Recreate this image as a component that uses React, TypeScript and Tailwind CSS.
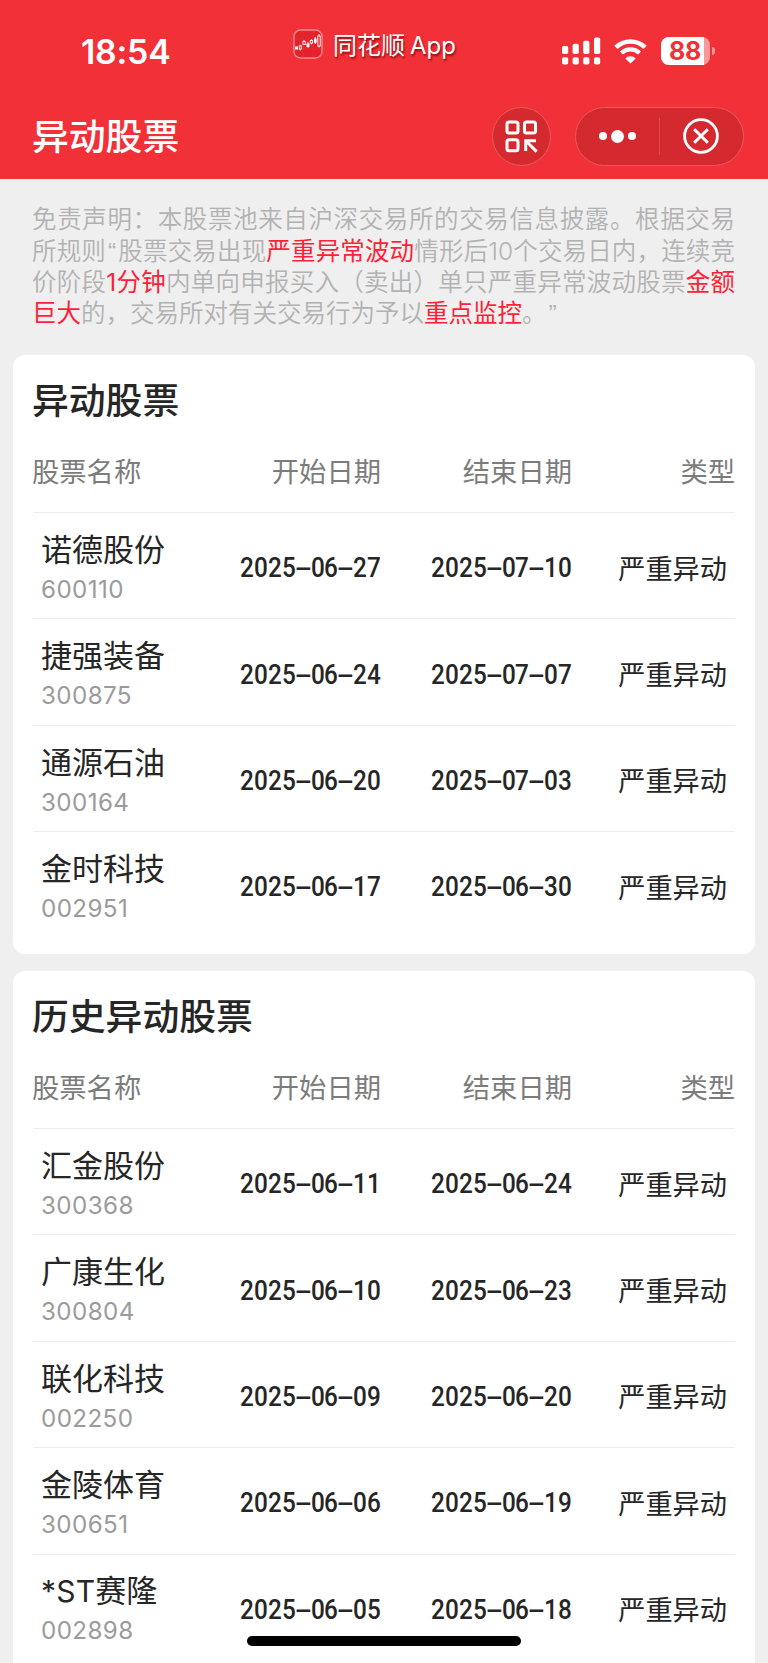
import React from "react";

type Stock = { name: string; code: string; start: string; end: string };

const current: Stock[] = [
  { name: "诺德股份", code: "600110", start: "2025-06-27", end: "2025-07-10" },
  { name: "捷强装备", code: "300875", start: "2025-06-24", end: "2025-07-07" },
  { name: "通源石油", code: "300164", start: "2025-06-20", end: "2025-07-03" },
  { name: "金时科技", code: "002951", start: "2025-06-17", end: "2025-06-30" },
];

const history: Stock[] = [
  { name: "汇金股份", code: "300368", start: "2025-06-11", end: "2025-06-24" },
  { name: "广康生化", code: "300804", start: "2025-06-10", end: "2025-06-23" },
  { name: "联化科技", code: "002250", start: "2025-06-09", end: "2025-06-20" },
  { name: "金陵体育", code: "300651", start: "2025-06-06", end: "2025-06-19" },
  { name: "*ST赛隆", code: "002898", start: "2025-06-05", end: "2025-06-18" },
];

function DateText({ value }: { value: string }) {
  return (
    <span className="flex justify-end pt-[5px] font-['Roboto'] text-[27px] leading-[32px] font-medium">
      {value.split("").map((ch, i) => (
        <span
          key={i}
          className={
            ch === "-"
              ? "flex w-[14.9px] origin-center scale-x-[1.95] justify-center"
              : "flex w-[13.9px] origin-center scale-x-[0.9] justify-center"
          }
        >
          {ch}
        </span>
      ))}
    </span>
  );
}

function StockName({ name }: { name: string }) {
  const latin = name.match(/^[*A-Z]+/)?.[0] ?? "";
  return (
    <div className="text-[31px] leading-[40px] whitespace-nowrap">
      {latin && <span className="font-['Inter'] text-[30px] leading-none tracking-[0.2px]">{latin}</span>}
      {name.slice(latin.length)}
    </div>
  );
}

function Card({ title, rows }: { title: string; rows: Stock[] }) {
  const cols = "grid grid-cols-[157px_191px_191px_163px] items-center";
  return (
    <section className="rounded-xl bg-white px-5 pb-4">
      <h2 className="-ml-px flex h-[88px] items-center pb-px text-[36.8px] font-medium text-[#262626]">{title}</h2>
      <div className={`${cols} h-[69.4px] pb-[13px] text-[27.3px] text-[#7c7c7c]`}>
        <span className="-ml-px">股票名称</span>
        <span className="text-right">开始日期</span>
        <span className="text-right">结束日期</span>
        <span className="text-right">类型</span>
      </div>
      {rows.map((r) => (
        <div key={r.code} className={`${cols} h-[106.4px] border-t border-[#ededed] text-[#262626]`}>
          <div className="pt-[7px] pl-2">
            <StockName name={r.name} />
            <div className="font-['Inter'] text-[24.2px] leading-[43px] tracking-[0.4px] text-[#9b9b9b]">
              {r.code}
            </div>
          </div>
          <DateText value={r.start} />
          <DateText value={r.end} />
          <span className="pt-[2.6px] pr-2 text-right text-[27.2px]">严重异动</span>
        </div>
      ))}
    </section>
  );
}

function Red({ children }: { children: React.ReactNode }) {
  return <span className="font-normal text-[#ff1f38]">{children}</span>;
}

function Quote({ children }: { children: React.ReactNode }) {
  return <span className="ml-[2px] font-['Liberation_Sans'] leading-none tracking-[2px]">{children}</span>;
}

function AppLogo() {
  return (
    <svg className="h-[30px] w-[30px]" viewBox="0 0 30 30" fill="none">
      <rect x="1" y="1" width="28" height="28" rx="6.5" fill="#e3222b" stroke="#fa8a8f" strokeWidth="1.4" />
      <path d="M2 10h26M2 20h26M10 2v26M20 2v26" stroke="#ee343c" strokeWidth=".5" />
      <g fill="#fff">
        <rect x="2" y="17.5" width="3" height="3" />
        <rect x="13.5" y="14.5" width="3" height="3.5" />
        <rect x="21" y="9.5" width="2.6" height="4.2" />
      </g>
      <g stroke="#fff" strokeWidth=".9">
        <path d="M7.3 15.7v1.3M7.3 20v1.5M11 11v1.5M18.4 10.3v1.2M18.4 14v1.4M22.3 8v7M26 5v2M26 17v1.5M15 13v6" />
        <rect x="6.2" y="17" width="2.2" height="3" />
        <rect x="9.9" y="12.5" width="2.3" height="3" />
        <rect x="17.3" y="11.5" width="2.2" height="2.5" />
        <rect x="24.8" y="7" width="2.4" height="10" />
      </g>
    </svg>
  );
}

function Signal() {
  return (
    <svg className="h-[28px] w-[39px]" viewBox="0 0 39 28" fill="#fff">
      <rect x="0" y="9" width="6.2" height="8" rx="1.8" />
      <rect x="10.6" y="6.8" width="6.2" height="10.2" rx="1.8" />
      <rect x="21.2" y="3.8" width="6.2" height="13.2" rx="1.8" />
      <rect x="32" y="0.6" width="6.2" height="16.4" rx="1.8" />
      <rect x="0" y="20.3" width="6.2" height="7.2" rx="1.8" />
      <rect x="10.6" y="20.3" width="6.2" height="7.2" rx="1.8" />
      <rect x="21.2" y="20.3" width="6.2" height="7.2" rx="1.8" />
      <rect x="32" y="20.3" width="6.2" height="7.2" rx="1.8" />
    </svg>
  );
}

function Wifi() {
  return (
    <svg className="h-[25px] w-[33px]" viewBox="0 0 33 25" fill="none">
      <path d="M1.9 8.4a21 21 0 0 1 29.2 0" stroke="#fff" strokeWidth="4.6" />
      <path d="M7.4 14a13.2 13.2 0 0 1 18.2 0" stroke="#fff" strokeWidth="4.4" />
      <path d="M16.5 24.6l-5.2-5.2a7.6 7.6 0 0 1 10.4 0z" fill="#fff" />
    </svg>
  );
}

export default function App() {
  return (
    <div className="relative h-[1663px] w-[768px] overflow-hidden bg-[#efefef] font-['Noto_Sans_CJK_SC',sans-serif]">
      <header className="h-[179px] bg-[#f23038] text-white">
        <div className="flex h-[100px] items-start">
          <div className="w-[293px] pt-[32px] pl-[81px] font-['Inter'] text-[33.8px] leading-[40px] font-semibold tracking-[-0.2px]">
            18:54
          </div>
          <div className="flex w-[268.5px] items-start pt-[29px]">
            <AppLogo />
            <span className="ml-[10px] h-[32px] text-[24px] leading-[29px] whitespace-nowrap [text-shadow:1px_2px_2px_rgba(80,0,0,0.65)]">
              同花顺<span className="ml-[5px] font-['Inter'] text-[24px] leading-none">App</span>
            </span>
          </div>
          <div className="flex items-center pt-[37px]">
            <Signal />
            <div className="ml-[13.5px]">
              <Wifi />
            </div>
            <div className="ml-[14px] flex items-center">
              <div className="flex h-[28px] w-[49px] items-center rounded-[8px] bg-[#f9989b]">
                <div className="flex h-full w-[43px] items-center justify-center rounded-l-[8px] bg-white pl-[5px] font-['Inter'] text-[25px] leading-[28px] font-bold tracking-[-0.3px] text-[#f23038]">
                  88
                </div>
              </div>
              <div className="ml-[2px] h-[8px] w-[3px] rounded-r-full bg-[#f9989b]" />
            </div>
          </div>
        </div>
        <div className="flex items-center pt-[6px] pl-[32px]">
          <h1 className="w-[460px] pb-[4px] text-[36.8px] leading-[56px] font-medium">异动股票</h1>
          <div className="flex h-[59px] w-[59px] items-center justify-center rounded-full border border-[#ea5a60] bg-[#d3292f]">
            <svg className="h-[33px] w-[33px]" viewBox="0 0 33 33" fill="none" stroke="#fff" strokeWidth="3">
              <rect x="2" y="2" width="11" height="11" rx="2" />
              <rect x="19.5" y="2" width="11" height="11" rx="2" />
              <rect x="2" y="19.7" width="11" height="11" rx="2" />
              <path d="M20.7 31V20.7H31M21 21l10.6 10.6" />
            </svg>
          </div>
          <div className="ml-[24px] flex h-[59px] w-[169px] items-center rounded-full border border-[#ea5a60] bg-[#d3292f]">
            <div className="flex h-[37px] w-[84px] items-center justify-center gap-1 border-r border-[#e2484e]">
              <i className="h-2 w-2 rounded-full bg-white" />
              <i className="h-[13px] w-[13px] rounded-full bg-white" />
              <i className="h-2 w-2 rounded-full bg-white" />
            </div>
            <div className="flex flex-1 justify-center pr-[2px]">
              <svg className="h-[36px] w-[36px]" viewBox="0 0 36 36" fill="none" stroke="#fff" strokeWidth="2.8">
                <circle cx="18" cy="18" r="16.4" />
                <path d="M11.2 11.2l13.6 13.6M24.8 11.2L11.2 24.8" strokeWidth="3" />
              </svg>
            </div>
          </div>
        </div>
      </header>

      <div className="flex h-[175.7px] flex-col pt-[25.2px] pr-[33px] pl-[32px] font-['Inter','Noto_Sans_CJK_SC',sans-serif] text-[24.5px] leading-[31.4px] font-[350] whitespace-nowrap text-[#b2b2b2] [text-spacing-trim:space-all]">
        <p className="h-[31.4px] [text-align-last:justify]">
          免责声明：本股票池来自沪深交易所的交易信息披露。根据交易
        </p>
        <p className="h-[31.4px] [text-align-last:justify]">
          所规则<Quote>“</Quote>股票交易出现<Red>严重异常波动</Red>情形后10个交易日内，连续竞
        </p>
        <p className="h-[31.4px] [text-align-last:justify]">
          价阶段<Red>1分钟</Red>内单向申报买入（卖出）单只严重异常波动股票<Red>金额</Red>
        </p>
        <p className="h-[31.4px]">
          <Red>巨大</Red>的，交易所对有关交易行为予以<Red>重点监控</Red>。<Quote>”</Quote>
        </p>
      </div>

      <main className="flex flex-col gap-[17px] px-[13px]">
        <Card title="异动股票" rows={current} />
        <Card title="历史异动股票" rows={history} />
      </main>

      <div className="absolute bottom-[17px] left-[247px] h-[10px] w-[274px] rounded-full bg-black" />
    </div>
  );
}
